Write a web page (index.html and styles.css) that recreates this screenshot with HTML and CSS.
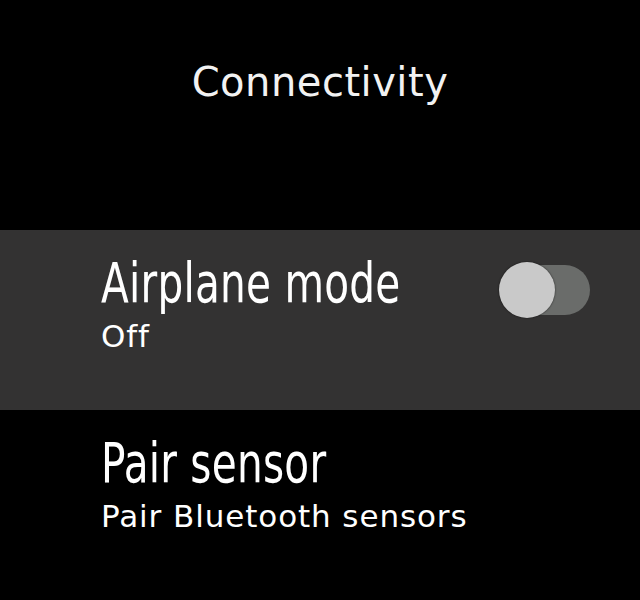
FILE: index.html
```html
<!DOCTYPE html>
<html>
<head>
<meta charset="utf-8">
<link rel="stylesheet" href="styles.css">
</head>
<body>
<div class="screen">
  <header class="title">Connectivity</header>
  <div class="item item-active">
    <div class="texts">
      <div class="primary">Airplane mode</div>
      <div class="secondary">Off</div>
    </div>
    <div class="toggle"><div class="knob"></div></div>
  </div>
  <div class="item">
    <div class="texts">
      <div class="primary">Pair sensor</div>
      <div class="secondary">Pair Bluetooth sensors</div>
    </div>
  </div>
</div>
</body>
</html>
```
FILE: styles.css
```css
html, body {
  margin: 0;
  padding: 0;
  background: #000;
}
.screen {
  width: 640px;
  height: 600px;
  background: #000;
  color: #fff;
  overflow: hidden;
  font-family: "DejaVu Sans", sans-serif;
}
.title {
  height: 230px;
  box-sizing: border-box;
  padding-top: 57px;
  text-align: center;
  font-size: 40px;
  letter-spacing: 0.5px;
  line-height: 50px;
  color: #f2f2f2;
}
.item {
  display: flex;
  align-items: flex-start;
  padding: 25px 50px 0 101px;
  height: 180px;
  box-sizing: border-box;
}
.item-active {
  background: #333232;
}
.texts {
  flex: 1;
  min-width: 0;
}
.primary {
  font-family: "DejaVu Sans Condensed", "Liberation Sans Narrow", sans-serif;
  font-size: 55px;
  line-height: 56px;
  letter-spacing: 0.3px;
  white-space: nowrap;
  transform: scaleX(0.82);
  transform-origin: left;
}
.secondary {
  margin-top: 5px;
  font-size: 31px;
  line-height: 40px;
  letter-spacing: 0.9px;
  white-space: nowrap;
}
.toggle {
  position: relative;
  flex: none;
  width: 90px;
  height: 50px;
  margin-top: 10px;
  border-radius: 25px;
  background: #6a6c6a;
}
.knob {
  position: absolute;
  left: -1px;
  top: -3px;
  width: 56px;
  height: 56px;
  border-radius: 50%;
  background: #c9c9c9;
  box-shadow: 0 0 2px rgba(0,0,0,0.7);
}
```
